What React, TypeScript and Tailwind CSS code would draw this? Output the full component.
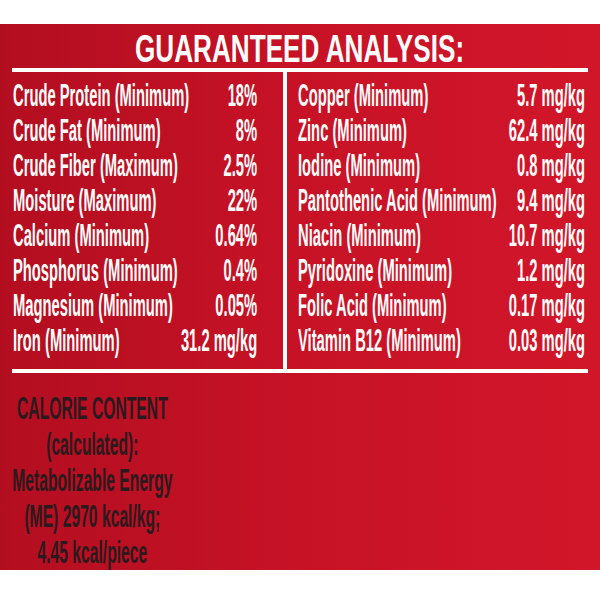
const leftRows: [string, string][] = [
  ["Crude Protein (Minimum)", "18%"],
  ["Crude Fat (Minimum)", "8%"],
  ["Crude Fiber (Maximum)", "2.5%"],
  ["Moisture (Maximum)", "22%"],
  ["Calcium (Minimum)", "0.64%"],
  ["Phosphorus (Minimum)", "0.4%"],
  ["Magnesium (Minimum)", "0.05%"],
  ["Iron (Minimum)", "31.2 mg/kg"],
];

const rightRows: [string, string][] = [
  ["Copper (Minimum)", "5.7 mg/kg"],
  ["Zinc (Minimum)", "62.4 mg/kg"],
  ["Iodine (Minimum)", "0.8 mg/kg"],
  ["Pantothenic Acid (Minimum)", "9.4 mg/kg"],
  ["Niacin (Minimum)", "10.7 mg/kg"],
  ["Pyridoxine (Minimum)", "1.2 mg/kg"],
  ["Folic Acid (Minimum)", "0.17 mg/kg"],
  ["Vitamin B12 (Minimum)", "0.03 mg/kg"],
];

function Rows({ rows }: { rows: [string, string][] }) {
  return (
    <>
      {rows.map(([label, value]) => (
        <div key={label} className="flex justify-between whitespace-nowrap">
          <span>{label}</span>
          <span>{value}</span>
        </div>
      ))}
    </>
  );
}

export default function App() {
  return (
    <div
      className="w-[600px] h-[600px] overflow-hidden bg-white"
      style={{ fontFamily: '"Liberation Sans", Arial, sans-serif' }}
    >
      <div className="mt-[24px] h-[546px] bg-linear-to-r from-[#b30e20] via-[#c71226] to-[#d2162a] px-[12px]">
        {/* Title */}
        <div className="h-[44px] pt-[5px] flex justify-center">
          <span className="inline-block scale-x-[0.67] whitespace-nowrap text-[39px] leading-[39px] font-bold text-white">
            GUARANTEED ANALYSIS:
          </span>
        </div>

        {/* Analysis table */}
        <div className="grid grid-cols-[275px_1fr] border-y-4 border-white text-white font-bold text-[31px] leading-[35px]">
          <div className="border-r-4 border-white pt-[6px] pb-[11px] pl-[1px] overflow-hidden">
            <div className="w-[513px] origin-left scale-x-[0.476]">
              <Rows rows={leftRows} />
            </div>
          </div>
          <div className="pt-[6px] pb-[11px] pl-[11px] overflow-hidden">
            <div className="w-[603px] origin-left scale-x-[0.476]">
              <Rows rows={rightRows} />
            </div>
          </div>
        </div>

        {/* Calorie content */}
        <div className="pt-[17px] overflow-hidden">
          <div className="w-[328px] origin-left scale-x-[0.49] text-center text-[32px] leading-[36px] font-bold text-[#2b1a1d]">
            <div>CALORIE CONTENT</div>
            <div>(calculated):</div>
            <div>Metabolizable Energy</div>
            <div>(ME) 2970 kcal/kg;</div>
            <div>4.45 kcal/piece</div>
          </div>
        </div>
      </div>
    </div>
  );
}
